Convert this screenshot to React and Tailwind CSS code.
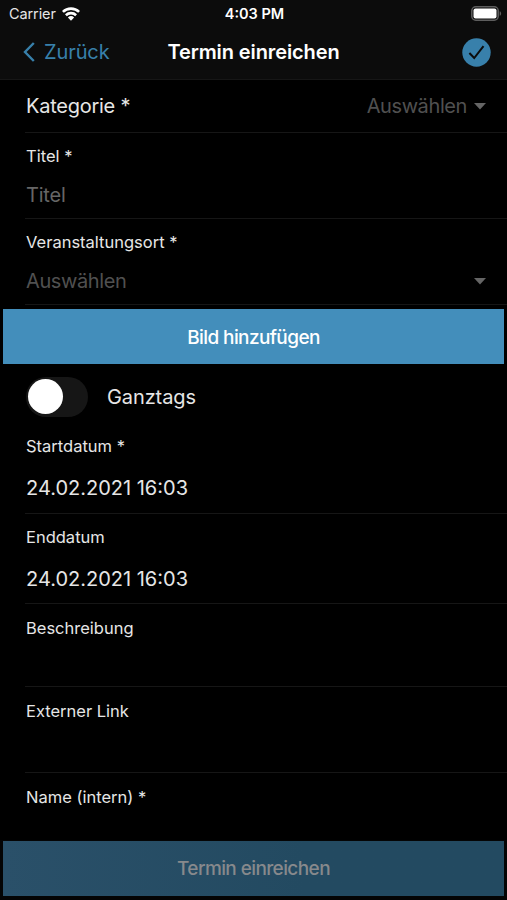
import clsx from "clsx"

const ChevronLeft = () => (
  <svg width="12" height="20" viewBox="0 0 12 20" fill="none" stroke="#3880ab" strokeWidth="2.4">
    <path d="M10.8 1 2 10l8.8 9" />
  </svg>
)

const WifiIcon = () => (
  <svg width="18" height="14" viewBox="0 0 18 14" fill="none" stroke="#fff" strokeWidth="2.6">
    <path d="M.9 4.9a11.6 11.6 0 0 1 16.2 0" />
    <path d="M3.9 8.2a7.3 7.3 0 0 1 10.2 0" />
    <path d="M9 13.7 5.9 10.5a4.5 4.5 0 0 1 6.2 0z" fill="#fff" stroke="none" />
  </svg>
)

const BatteryIcon = () => (
  <svg width="31" height="15" viewBox="0 0 31 15">
    <rect x=".8" y=".8" width="26.4" height="13.4" rx="4" fill="none" stroke="#5e5e5e" strokeWidth="1.5" />
    <rect x="2.5" y="2.5" width="23" height="10" rx="2" fill="#fff" />
    <path d="M28.7 5.2c1.9.7 1.9 3.9 0 4.6z" fill="#5e5e5e" />
  </svg>
)

const CheckCircle = () => (
  <svg width="29" height="29" viewBox="0 0 29 29">
    <circle cx="14.5" cy="14.5" r="14.2" fill="#3880ab" />
    <path d="m7.4 15 4.8 5 9.3-11.8" fill="none" stroke="#0c0c0c" strokeWidth="2" />
  </svg>
)

const Caret = () => (
  <svg width="12" height="7" viewBox="0 0 12 7" fill="#656565">
    <path d="M0 0h12L6 6.5z" />
  </svg>
)

function Field({ label, value, placeholder, select, className, valueClass = "mt-[15px]" }) {
  return (
    <div className={clsx("ml-[25px] flex flex-col border-b border-[#161616] pr-[21px] pl-px", className)}>
      <p className="text-[16.5px] leading-5">{label}</p>
      <div className={clsx("flex items-center justify-between text-[20px] leading-7", valueClass)}>
        {value && <span>{value}</span>}
        {placeholder && (
          <span className={select ? "tracking-[-0.4px] text-[#505050]" : "tracking-[-0.2px] text-[#666]"}>{placeholder}</span>
        )}
        {select && <Caret />}
      </div>
    </div>
  )
}

export default function App() {
  return (
    <div className="flex h-[900px] w-[507px] flex-col overflow-hidden bg-black font-['Inter',sans-serif] text-[#e6e6e6]">
      <header className="h-20 shrink-0 border-b border-[#161616] bg-[#0c0c0c]">
        <div className="grid h-[27px] grid-cols-[1fr_auto_1fr] items-center pr-[5px] pl-[7px] text-[14.5px]">
          <div className="flex items-center gap-1.5 pl-0.5">
            <span className="tracking-[-0.1px]">Carrier</span>
            <WifiIcon />
          </div>
          <span className="text-center font-semibold text-white">4:03 PM</span>
          <div className="flex justify-end">
            <BatteryIcon />
          </div>
        </div>
        <div className="grid h-[50px] grid-cols-[1fr_auto_1fr] items-center px-4 text-[20px]">
          <button className="flex items-center gap-[9px] pl-[7px] text-[#3880ab]">
            <ChevronLeft />
            <span className="tracking-[-0.1px]">Zurück</span>
          </button>
          <h1 className="font-semibold tracking-[-0.1px] text-white">Termin einreichen</h1>
          <button className="flex justify-end">
            <CheckCircle />
          </button>
        </div>
      </header>

      <main className="flex flex-1 flex-col">
        <div className="ml-[25px] flex h-[53px] items-center justify-between border-b border-[#161616] pr-[21px] pl-px text-[20px]">
          <span className="tracking-[-0.25px]">Kategorie *</span>
          <span className="flex items-center gap-[7px] tracking-[-0.4px] text-[#505050]">
            Auswählen
            <Caret />
          </span>
        </div>
        <Field label="Titel *" placeholder="Titel" className="h-[86px] pt-[13px]" />
        <Field label="Veranstaltungsort *" placeholder="Auswählen" select className="h-[86px] pt-[13px]" />

        <button className="mx-[3px] mt-1 h-[55px] bg-[#438ebb] pt-[3px] text-[19px] font-medium tracking-[-0.6px] text-white">
          Bild hinzufügen
        </button>

        <div className="ml-[26px] flex h-[65px] items-center gap-5">
          <div className="flex h-10 w-[62px] items-center rounded-full bg-[#161616] px-0.5">
            <div className="size-[35px] rounded-full bg-white" />
          </div>
          <span className="-ml-px text-[20px] tracking-[-0.1px]">Ganztags</span>
        </div>

        <Field label="Startdatum *" value="24.02.2021 16:03" className="h-[85px] pt-[7px]" valueClass="mt-[18px]" />
        <Field label="Enddatum" value="24.02.2021 16:03" className="h-[90px] pt-[13px]" valueClass="mt-[18px]" />
        <Field label="Beschreibung" className="h-[83px] pt-[14px]" />
        <Field label="Externer Link" className="h-[86px] pt-[14px]" />
        <div className="ml-[26px] pt-[14px] text-[16.5px] leading-5">Name (intern) *</div>
      </main>

      <footer className="h-[60px] shrink-0 bg-[#040404] px-[3px] pt-px">
        <button className="h-[55px] w-full bg-linear-to-r from-[#2a5069] to-[#234a61] to-60% pt-0.5 text-[19px] font-medium tracking-[-0.6px] text-[#87898c]">
          Termin einreichen
        </button>
      </footer>
    </div>
  )
}
